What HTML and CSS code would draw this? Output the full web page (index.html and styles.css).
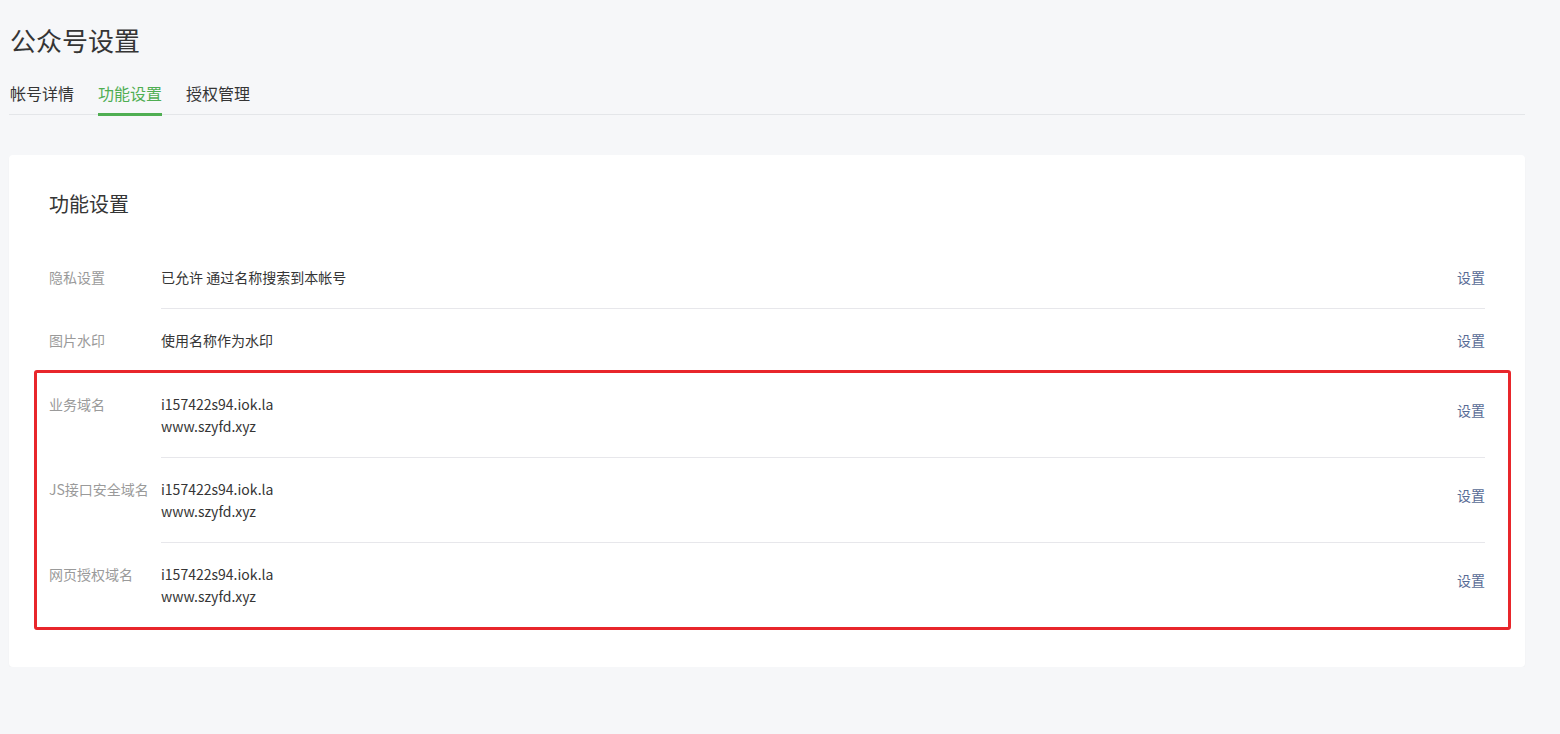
FILE: index.html
```html
<!DOCTYPE html>
<html lang="zh-CN">
<head>
    <meta charset="UTF-8">
    <meta name="viewport" content="width=device-width, initial-scale=1.0">
    <title>公众号设置</title>
    <link rel="stylesheet" href="styles.css">
</head>
<body>
    <div class="page">
        <h1 class="page-title">公众号设置</h1>
        <div class="tabs">
            <a class="tab">帐号详情</a>
            <a class="tab active">功能设置</a>
            <a class="tab">授权管理</a>
        </div>

        <div class="card">
            <h2 class="card-title">功能设置</h2>

            <div class="row">
                <div class="label">隐私设置</div>
                <div class="body">
                    <div class="value">已允许 通过名称搜索到本帐号</div>
                    <a class="link">设置</a>
                </div>
            </div>
            <div class="row">
                <div class="label">图片水印</div>
                <div class="body no-line">
                    <div class="value">使用名称作为水印</div>
                    <a class="link">设置</a>
                </div>
            </div>

            <div class="highlight">
                <div class="row multi">
                    <div class="label">业务域名</div>
                    <div class="body">
                        <div class="value">i157422s94.iok.la<br>www.szyfd.xyz</div>
                        <a class="link">设置</a>
                    </div>
                </div>
                <div class="row multi">
                    <div class="label">JS接口安全域名</div>
                    <div class="body">
                        <div class="value">i157422s94.iok.la<br>www.szyfd.xyz</div>
                        <a class="link">设置</a>
                    </div>
                </div>
                <div class="row multi">
                    <div class="label">网页授权域名</div>
                    <div class="body no-line">
                        <div class="value">i157422s94.iok.la<br>www.szyfd.xyz</div>
                        <a class="link">设置</a>
                    </div>
                </div>
            </div>
        </div>
    </div>
</body>
</html>
```

FILE: styles.css
```css
body {
    margin: 0;
    background-color: #f6f7f9;
    color: #353535;
    font-family: "Microsoft YaHei", "Noto Sans CJK SC", sans-serif;
    font-size: 14px;
}
.page {
    width: 1516px;
    margin-left: 9px;
}
.page-title {
    margin: 20px 0 0 1px;
    font-size: 26px;
    font-weight: normal;
    line-height: 40px;
}
.tabs {
    display: flex;
    gap: 24px;
    margin-top: 21px;
    padding-left: 1px;
    border-bottom: 1px solid #e4e6e9;
}
.tab {
    font-size: 16px;
    line-height: 24px;
    padding-bottom: 8px;
    border-bottom: 3px solid transparent;
    margin-bottom: -2px;
    cursor: pointer;
}
.tab.active {
    color: #4fae52;
    border-bottom-color: #4fae52;
}
.card {
    margin-top: 40px;
    background-color: #fff;
    border-radius: 4px;
    box-shadow: 0 1px 2px rgba(0, 0, 0, 0.03);
    padding: 34px 40px 37px;
}
.card-title {
    margin: 0 0 27px;
    font-size: 20px;
    font-weight: normal;
    line-height: 30px;
}
.row {
    display: flex;
    line-height: 22px;
}
.label {
    width: 112px;
    flex-shrink: 0;
    padding-top: 20px;
    color: #9a9a9a;
    white-space: nowrap;
}
.body {
    flex: 1;
    display: flex;
    justify-content: space-between;
    align-items: flex-start;
    padding: 20px 0;
    border-bottom: 1px solid #e7e7eb;
}
.body.no-line {
    border-bottom: none;
}
.link {
    color: #576b95;
    cursor: pointer;
}
.multi .link {
    padding-top: 6px;
}
.highlight {
    margin: -1px -26px 0 -15px;
    padding: 0 23px 0 12px;
    border: 3px solid #e8262b;
    border-radius: 3px;
}
```
